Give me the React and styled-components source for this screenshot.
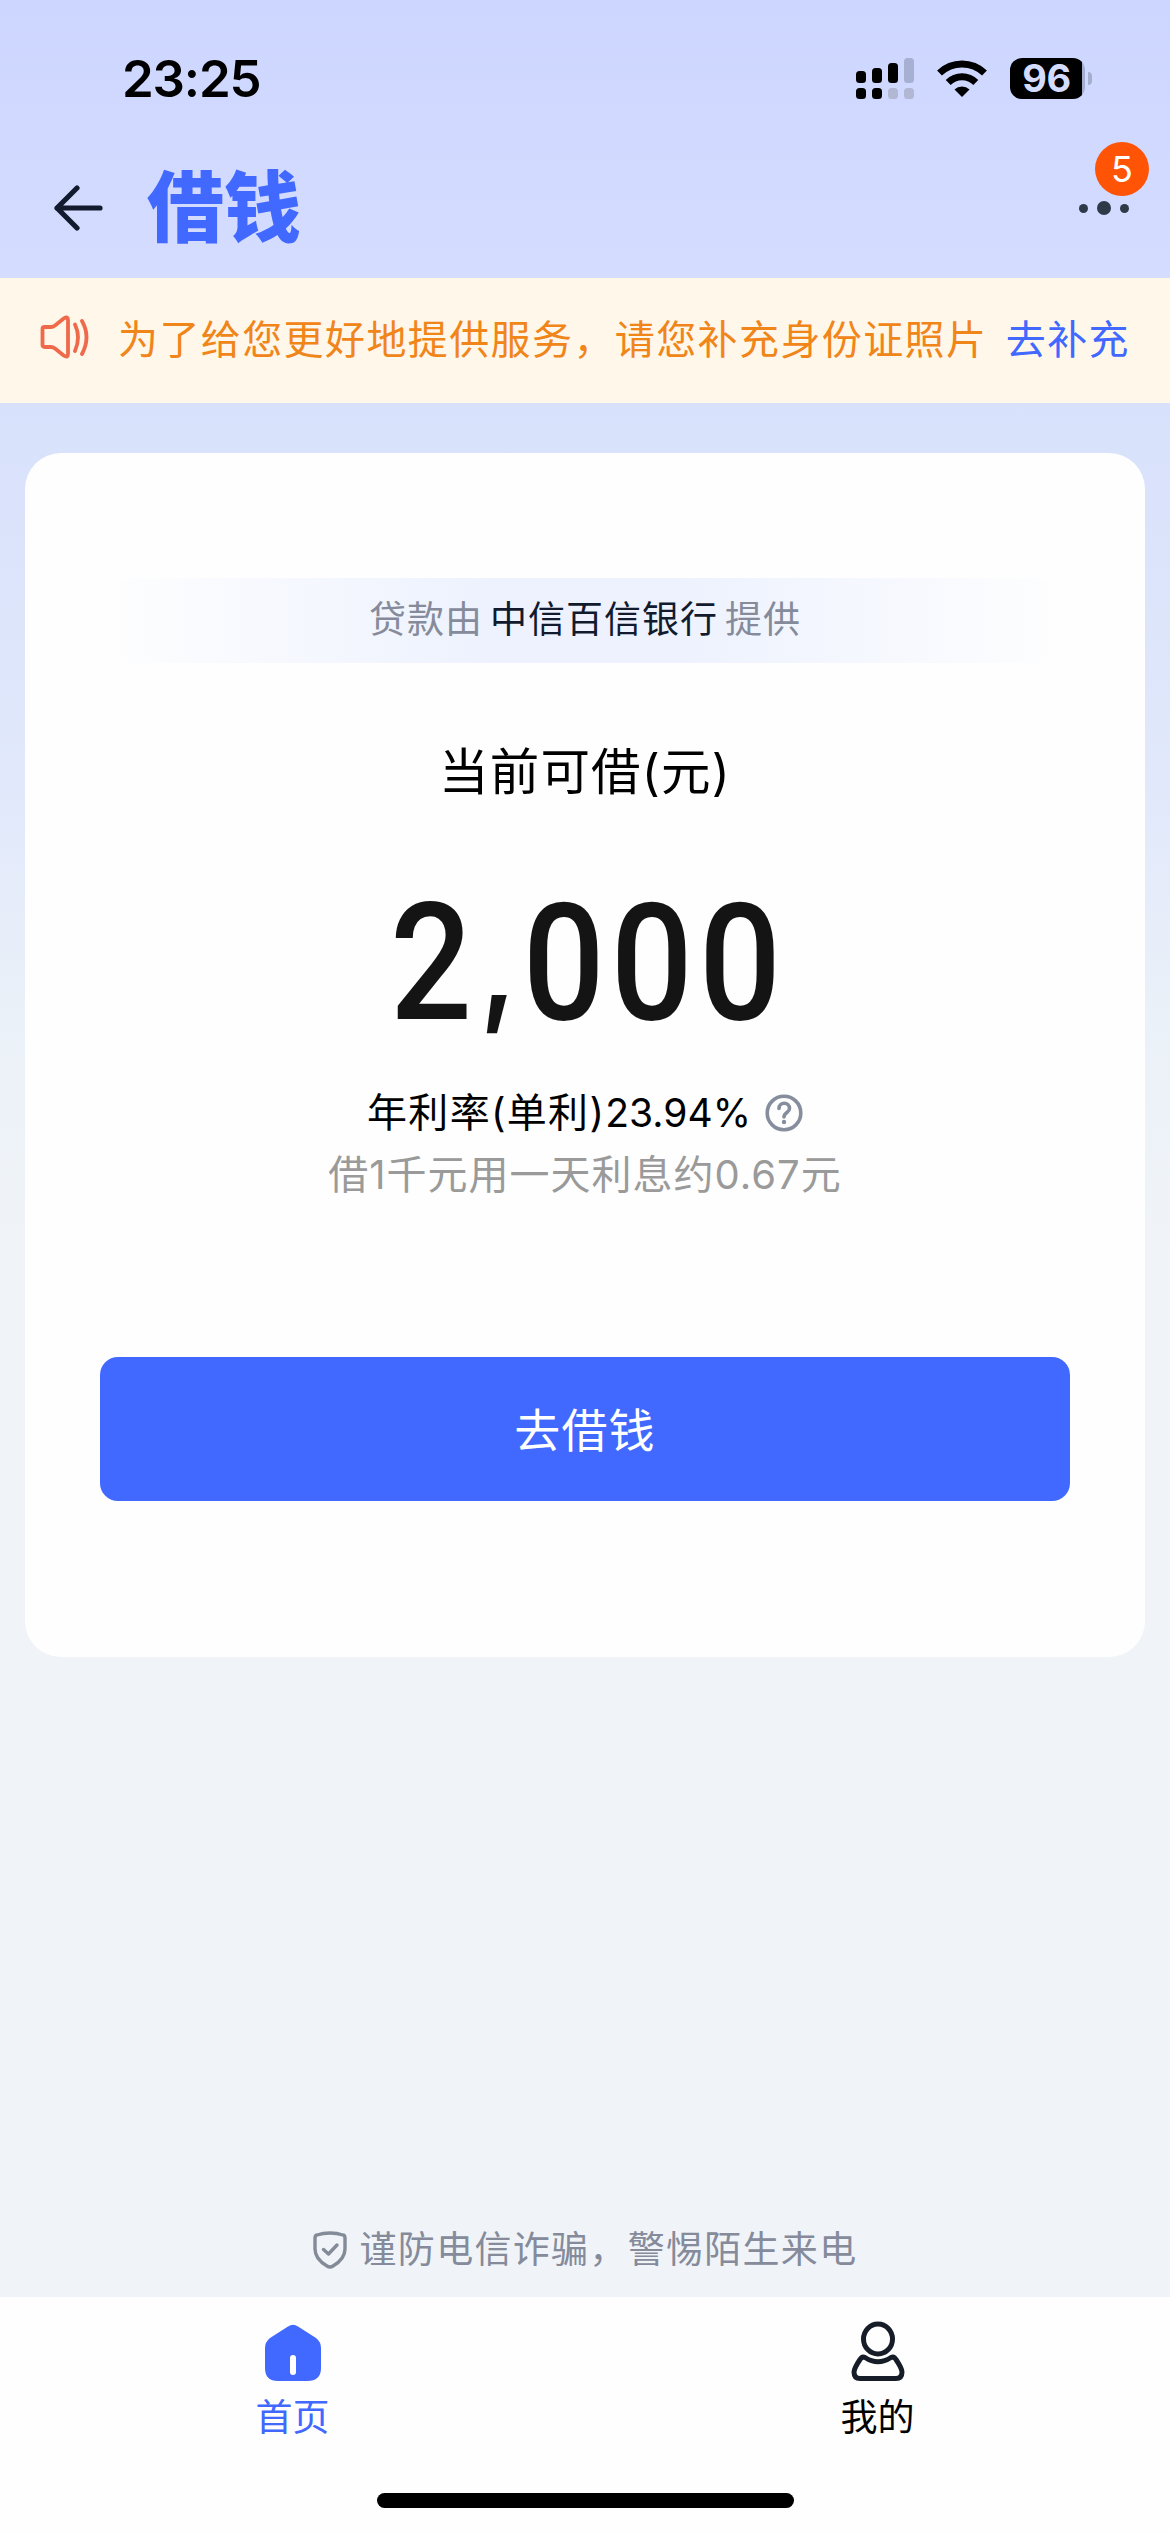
import React from 'react'
import styled, { createGlobalStyle } from 'styled-components'

const colors = {
  blue: '#4168ff',
  ink: '#121a2e',
  grey: '#858b9a',
  orange: '#f08519',
  badge: '#ff5405'
}

const GlobalStyle = createGlobalStyle`
  * {
    box-sizing: border-box;
  }
  body {
    margin: 0;
    font-family: Inter, 'Noto Sans CJK SC', sans-serif;
  }
`

const Screen = styled.div`
  width: 1170px;
  height: 2532px;
  display: flex;
  flex-direction: column;
  overflow: hidden;
  background: linear-gradient(180deg, #cdd6ff 0, #d4dcff 270px, #d9e2fb 440px, #e1e8fb 780px, #ebf1f8 1020px, #f0f4f8 1250px);
`

const StatusBar = styled.div`
  height: 138px;
  padding: 18px 78px 0 122px;
  display: flex;
  align-items: center;
  justify-content: space-between;
`

const Time = styled.div`
  font-size: 51px;
  font-weight: 600;
  letter-spacing: -1.2px;
  color: #000;
`

const StatusIcons = styled.div`
  display: flex;
  align-items: center;
  gap: 23px;
`

const Battery = styled.div`
  display: flex;
  align-items: center;
  gap: 3px;

  &::after {
    content: '';
    width: 4px;
    height: 13px;
    border-radius: 0 6px 6px 0;
    background: #a4aece;
  }
`

const BatteryLevel = styled.div`
  width: 75px;
  height: 41px;
  border-radius: 12px;
  background: linear-gradient(90deg, #000 72px, #a4aece 72px);
  color: #d3dbff;
  font-size: 38px;
  font-weight: 700;
  line-height: 41px;
  text-align: center;
  letter-spacing: -0.5px;
  padding-right: 2px;
`

const Header = styled.div`
  height: 140px;
  padding: 0 41px 0 53px;
  display: flex;
  align-items: center;
`

const Title = styled.div`
  flex: 1;
  margin-left: 44px;
  font-size: 77px;
  font-weight: 900;
  line-height: 138px;
  color: ${colors.blue};
`

const More = styled.div`
  position: relative;
  display: flex;
  align-items: center;
  gap: 9px;
`

const Dot = styled.span`
  width: ${props => props.size}px;
  height: ${props => props.size}px;
  border-radius: 50%;
  background: #2f3a48;
`

const Badge = styled.span`
  position: absolute;
  right: -20px;
  bottom: 19px;
  width: 54px;
  height: 54px;
  border-radius: 50%;
  background: ${colors.badge};
  color: #fff;
  font-size: 36px;
  line-height: 54px;
  text-align: center;
`

const Notice = styled.div`
  height: 125px;
  padding: 0 40px 7px;
  display: flex;
  align-items: center;
  background: #fff7ea;
  font-size: 40px;
  letter-spacing: 1.4px;
  white-space: nowrap;
`

const NoticeText = styled.span`
  flex: 1;
  margin-left: 29px;
  color: ${colors.orange};
`

const NoticeLink = styled.span`
  color: ${colors.blue};
`

const Card = styled.div`
  height: 1204px;
  margin: 50px 25px 0;
  padding: 125px 75px 0;
  border-radius: 36px;
  background: #fefefe;
  display: flex;
  flex-direction: column;
  align-items: center;
  white-space: nowrap;
`

const Provider = styled.div`
  width: 100%;
  height: 85px;
  padding-bottom: 7px;
  display: flex;
  align-items: center;
  justify-content: center;
  gap: 7px;
  font-size: 37px;
  letter-spacing: 1px;
  color: ${colors.grey};
  background: linear-gradient(90deg, #fefefe 0%, #edf2fe 40%, #edf2fe 60%, #fefefe 100%);
`

const BankName = styled.span`
  color: ${colors.ink};
`

const AmountLabel = styled.div`
  margin-top: 71px;
  font-size: 49.5px;
  line-height: 76px;
  letter-spacing: 1.2px;
  color: #000;
`

const Amount = styled.div`
  margin-top: 68px;
  font-family: Roboto, sans-serif;
  font-size: 164px;
  font-weight: 500;
  line-height: 170px;
  letter-spacing: 7px;
  margin-right: -7px;
  color: #141414;
  transform: scaleX(0.88);
`

const Comma = styled.span`
  margin-left: 2px;
  font-family: Inter, sans-serif;
  font-size: 130px;
  font-weight: 600;
  line-height: 0;
  vertical-align: 10px;
`

const Rate = styled.div`
  margin-top: 34px;
  display: flex;
  align-items: center;
  font-size: 40px;
  line-height: 62px;
  letter-spacing: 1.3px;
  color: #000;
`

const Percent = styled.span`
  margin-right: 14px;
  font-size: 39px;
  letter-spacing: 0;
`

const Interest = styled.div`
  font-size: 40px;
  line-height: 62px;
  letter-spacing: 1px;
  color: #9a9a9a;
`

const BorrowButton = styled.button`
  width: 970px;
  height: 144px;
  margin-top: 151px;
  padding: 0 0 5px;
  border: 0;
  border-radius: 18px;
  background: ${colors.blue};
  color: #fff;
  font-family: inherit;
  font-size: 46px;
  letter-spacing: 1.2px;
`

const SafetyTip = styled.div`
  margin-top: auto;
  height: 94px;
  display: flex;
  align-items: center;
  justify-content: center;
  gap: 13px;
  font-size: 37px;
  line-height: 54px;
  letter-spacing: 1.3px;
  color: ${colors.grey};
`

const TabBar = styled.div`
  height: 235px;
  background: #fefefe;
  display: grid;
  grid-template-columns: 1fr 1fr;
  grid-template-rows: 196px 15px;
  justify-items: center;
`

const Tab = styled.div`
  padding-top: 24px;
  display: flex;
  flex-direction: column;
  align-items: center;
  gap: 8px;
  font-size: 37px;
  line-height: 56px;
  color: ${props => (props.active ? colors.blue : '#000')};
`

const HomeIndicator = styled.div`
  grid-column: 1 / 3;
  width: 417px;
  height: 15px;
  border-radius: 8px;
  background: #000;
`

const SignalIcon = () => (
  <svg width="58" height="41" viewBox="0 0 58 41">
    <rect x="0" y="13" width="10" height="12" rx="3.5" />
    <rect x="16" y="10" width="10" height="15" rx="3.5" />
    <rect x="32" y="5" width="10" height="20" rx="3.5" />
    <rect x="48" y="0" width="10" height="25" rx="3.5" fill="#a6b0d2" />
    <rect x="0" y="30" width="10" height="11" rx="3.5" />
    <rect x="16" y="30" width="10" height="11" rx="3.5" />
    <rect x="32" y="30" width="10" height="11" rx="3.5" fill="#b2b7d4" />
    <rect x="48" y="30" width="10" height="11" rx="3.5" fill="#b2b7d4" />
  </svg>
)

const WifiIcon = () => (
  <svg width="50" height="37" viewBox="0 0 50 37">
    <g fill="none" stroke="#000" strokeWidth="7">
      <path d="M2.5 13A32.5 32.5 0 0 1 47.5 13" />
      <path d="M11.2 22.5A19.5 19.5 0 0 1 38.8 22.5" />
    </g>
    <path d="M25 37L17.5 29.5A11 11 0 0 1 32.5 29.5Z" />
  </svg>
)

const BackIcon = () => (
  <svg width="50" height="46" viewBox="0 0 50 46" fill="none" stroke={colors.ink} strokeWidth="5.2" strokeLinecap="round" strokeLinejoin="round">
    <path d="M24 3L4 23L24 43M4 23H47" />
  </svg>
)

const SpeakerIcon = () => (
  <svg width="49" height="44" viewBox="0 0 49 44" fill="none" stroke="#ee6a4b" strokeWidth="3.8" strokeLinecap="round" strokeLinejoin="round">
    <path d="M2.5 14Q2.5 12 4.5 12H11Q13 12 15 10.5L24 3.3Q28 1 28 5V39Q28 43 24 40.7L15 33.5Q13 32 11 32H4.5Q2.5 32 2.5 30Z" />
    <path d="M35 9.5Q41 22 35 36M42 6Q51 22 42 39" />
  </svg>
)

const HelpIcon = () => (
  <svg width="38" height="38" viewBox="0 0 38 38" fill="none" stroke="#868e9e" strokeWidth="3.6" strokeLinecap="round">
    <circle cx="19" cy="19" r="16.8" />
    <path d="M14 14.5C14 7.5 24.5 7.5 24.5 14.5C24.5 18.5 19 18.5 19 23" />
    <circle cx="19" cy="28" r="2.2" fill="#868e9e" stroke="none" />
  </svg>
)

const ShieldIcon = () => (
  <svg width="34" height="38" viewBox="0 0 34 38" fill="none" stroke="#828b97" strokeWidth="3.4" strokeLinecap="round" strokeLinejoin="round">
    <path d="M17 2Q24 2 30 4Q32 4.5 32 7V18Q32 28 20 35Q17 37 14 35Q2 28 2 18V7Q2 4.5 4 4Q10 2 17 2Z" />
    <path d="M10.5 18.5L15.5 23L24 14" />
  </svg>
)

const HomeIcon = () => (
  <svg width="58" height="61" viewBox="0 0 58 61">
    <path d="M24 5.5Q29 2 34 5.5L52 17Q57 21 57 27V47Q57 60 43 60H14Q1 60 1 47V27Q1 21 6 17Z" fill={colors.blue} />
    <path d="M29 37V51" stroke="#fff" strokeWidth="6" strokeLinecap="round" />
  </svg>
)

const UserIcon = () => (
  <svg width="56" height="61" viewBox="0 0 56 61" fill="none" stroke="#161c28" strokeWidth="5" strokeLinejoin="round">
    <ellipse cx="28" cy="18" rx="14.5" ry="15" />
    <path d="M15 36.5Q28 45 41 36.5Q44 35 46 38.5C51 46 52 49 52 51Q52 57.5 46 57.5H10Q4 57.5 4 51C4 49 5 46 10 38.5Q12 35 15 36.5Z" />
  </svg>
)

const App = () => {
  return (
    <Screen>
      <GlobalStyle />
      <StatusBar>
        <Time>23:25</Time>
        <StatusIcons>
          <SignalIcon />
          <WifiIcon />
          <Battery>
            <BatteryLevel>96</BatteryLevel>
          </Battery>
        </StatusIcons>
      </StatusBar>
      <Header>
        <BackIcon />
        <Title>借钱</Title>
        <More>
          <Dot size={9} />
          <Dot size={14} />
          <Dot size={9} />
          <Badge>5</Badge>
        </More>
      </Header>
      <Notice>
        <SpeakerIcon />
        <NoticeText>为了给您更好地提供服务，请您补充身份证照片</NoticeText>
        <NoticeLink>去补充</NoticeLink>
      </Notice>
      <Card>
        <Provider>
          <span>贷款由</span>
          <BankName>中信百信银行</BankName>
          <span>提供</span>
        </Provider>
        <AmountLabel>当前可借(元)</AmountLabel>
        <Amount>2<Comma>,</Comma>000</Amount>
        <Rate>
          <span>年利率(单利)</span>
          <Percent>23.94%</Percent>
          <HelpIcon />
        </Rate>
        <Interest>借1千元用一天利息约0.67元</Interest>
        <BorrowButton>去借钱</BorrowButton>
      </Card>
      <SafetyTip>
        <ShieldIcon />
        <span>谨防电信诈骗，警惕陌生来电</span>
      </SafetyTip>
      <TabBar>
        <Tab active>
          <HomeIcon />
          <span>首页</span>
        </Tab>
        <Tab>
          <UserIcon />
          <span>我的</span>
        </Tab>
        <HomeIndicator />
      </TabBar>
    </Screen>
  )
}

export default App
